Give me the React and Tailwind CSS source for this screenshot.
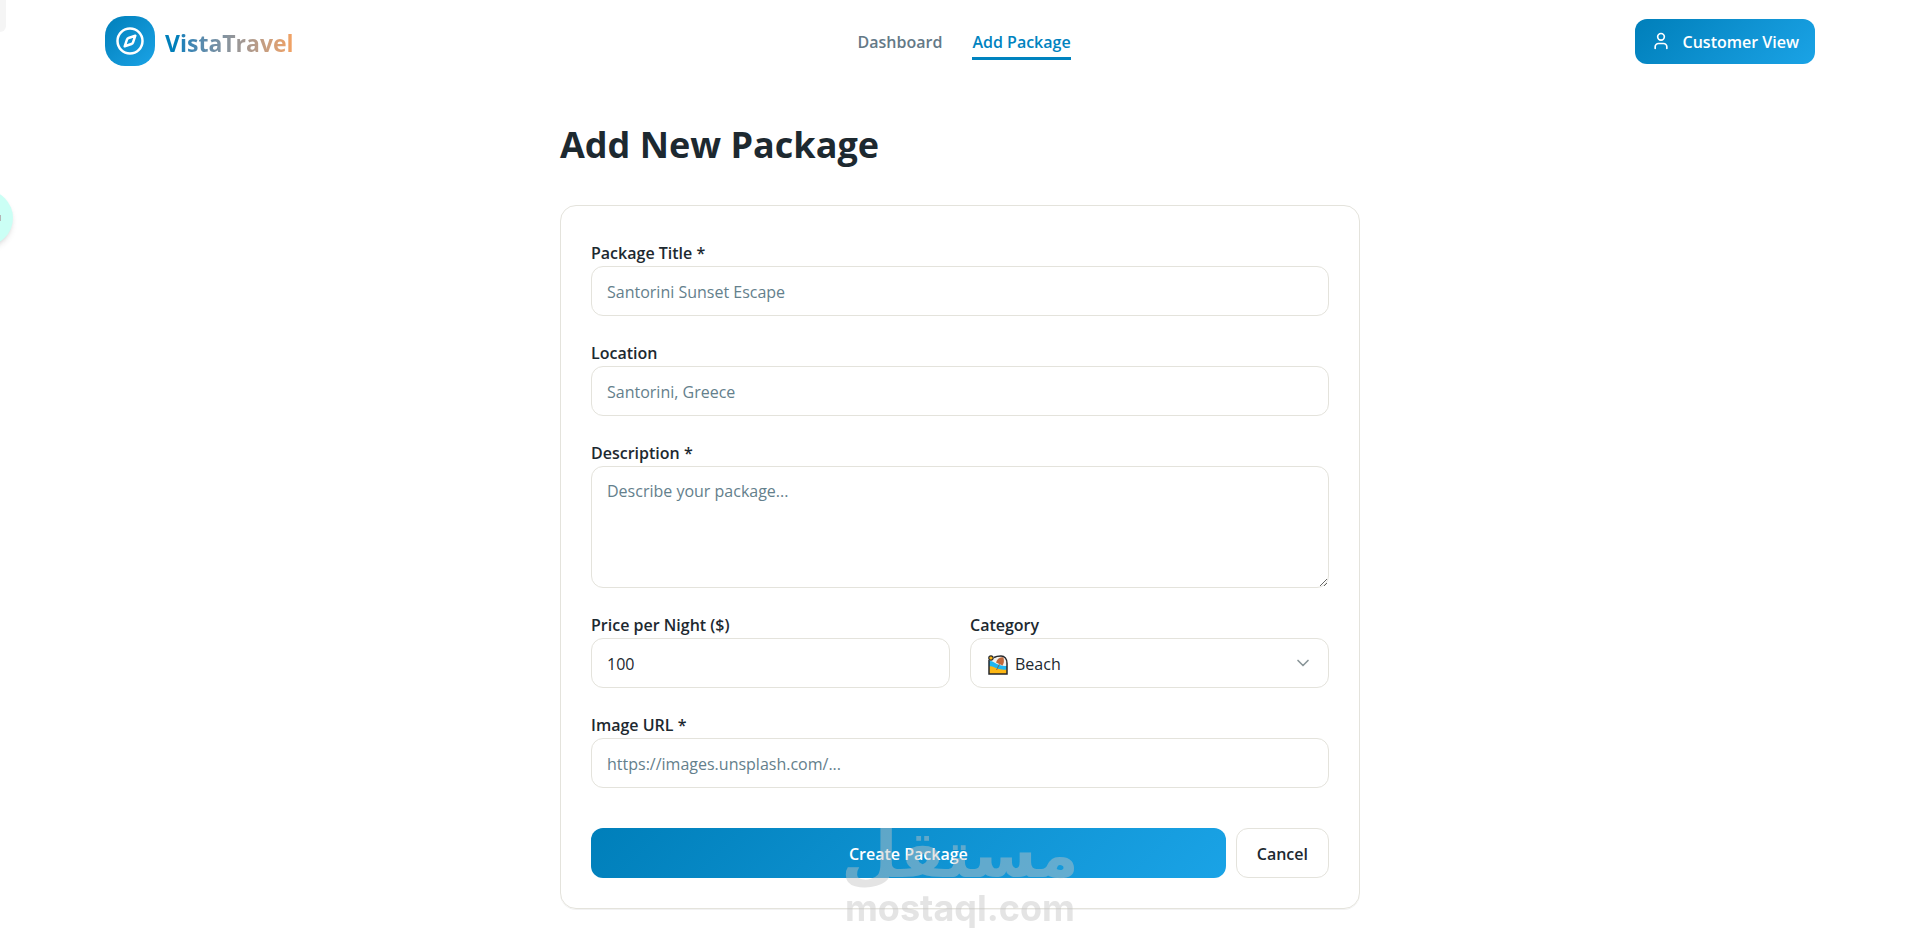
import { useState } from 'react'
import { Compass, User, ChevronDown } from 'lucide-react'

const inputClass =
  'block w-full rounded-xl border border-[#e4e3dc] bg-white px-[15px] text-[16px] text-[#1d2930] placeholder:text-[#64808c] focus:outline-none'

function Field({ id, label, children }) {
  return (
    <div>
      <label htmlFor={id} className="block pt-1 text-[16px] leading-[26px] font-semibold">
        {label}
      </label>
      {children}
    </div>
  )
}

function BeachIcon() {
  return (
    <svg viewBox="0 0 20 20" className="pointer-events-none absolute top-[17px] left-[18px] h-5 w-5">
      <path d="M1 6.5V19h18V8c0-4-2.500-7-6.500-7S7 2.500 5.500 3z" fill="#f4f1ec" />
      <path d="M1 6C4 5.500 6 7.500 9 9s6 2 10 2v4.500c-5 .5-8-1-11-2s-5-1.500-7-1z" fill="#1fb6f2" />
      <path d="M1 11.500c3-.8 5 1 8 2s6 1.500 10 1V19H1z" fill="#fdb714" />
      <path d="M8 7.500C9 4 12 1.500 15.500 2.500c.8 3 .5 6-1 8z" fill="#c1693c" />
      <path d="M11.500 9 8.500 15" stroke="#7d5a3c" strokeWidth="0.800" fill="none" />
      <path
        d="M1 5v14h18V8.500C19 4 16.500 1 13 1c-3 0-5 .3-7 1.500"
        fill="none"
        stroke="#26292c"
        strokeWidth="1.500"
      />
      <circle cx="3" cy="3" r="2.200" fill="#fdb714" stroke="#26292c" strokeWidth="1.200" />
    </svg>
  )
}

function Header() {
  return (
    <header className="px-[105px]">
      <div className="flex h-[82px] items-center justify-between">
        <a href="#home" className="flex items-center gap-[10px]">
          <span className="flex h-[50px] w-[50px] items-center justify-center rounded-[20px] bg-linear-135 from-[#007fba] to-[#1aa3e6]">
            <Compass size={30} className="text-white" />
          </span>
          <span className="bg-linear-to-r from-[#007fba] from-10% to-[#f4a261] bg-clip-text pt-1 text-[23px] font-bold text-transparent">
            VistaTravel
          </span>
        </a>
        <nav className="flex gap-[30px] pt-1 text-[16px] leading-[30px] font-semibold">
          <a href="#dashboard" className="text-[#647987]">Dashboard</a>
          <a href="#add" className="border-b-3 border-[#0083bf] text-[#0083bf]">Add Package</a>
        </nav>
        <button
          type="button"
          className="flex h-[45px] items-center gap-3 rounded-xl bg-linear-135 from-[#007fba] to-[#1aa3e6] px-4 text-[16px] font-semibold text-white"
        >
          <User size={20} />
          <span className="pt-0.5">Customer View</span>
        </button>
      </div>
    </header>
  )
}

function Watermark() {
  return (
    <div className="pointer-events-none absolute inset-x-0 bottom-5 flex flex-col items-center text-[#c4c4c4] opacity-45">
      <span lang="ar" dir="rtl" className="font-['DejaVu_Sans',sans-serif] text-[65px] leading-[66px] font-bold">
        مستقل
      </span>
      <span className="font-['Inter',sans-serif] text-[36px] leading-[40px] font-bold">mostaql.com</span>
    </div>
  )
}

export default function App() {
  const [price, setPrice] = useState('100')
  const [category, setCategory] = useState('beach')

  return (
    <div className="relative min-h-screen overflow-hidden bg-white pb-[39px] font-['Open_Sans',sans-serif] text-[#1d2930]">
      <Header />
      <main className="mx-auto max-w-[800px] pt-10">
        <h1 className="mb-[38px] text-[36px] leading-[45px] font-bold">Add New Package</h1>
        <form
          className="flex flex-col gap-5 rounded-2xl border border-[#e4e3dc] p-[30px] shadow-2xs"
          onSubmit={(e) => e.preventDefault()}
        >
          <Field id="title" label="Package Title *">
            <input id="title" className={`${inputClass} h-[50px] pt-0.5`} placeholder="Santorini Sunset Escape" />
          </Field>
          <Field id="location" label="Location">
            <input id="location" className={`${inputClass} h-[50px] pt-0.5`} placeholder="Santorini, Greece" />
          </Field>
          <Field id="description" label="Description *">
            <textarea
              id="description"
              className={`${inputClass} h-[122px] resize-y py-3`}
              placeholder="Describe your package..."
            />
          </Field>
          <div className="grid grid-cols-2 gap-5">
            <Field id="price" label="Price per Night ($)">
              <input
                id="price"
                inputMode="numeric"
                className={`${inputClass} h-[50px] pt-0.5`}
                value={price}
                onChange={(e) => setPrice(e.target.value)}
              />
            </Field>
            <Field id="category" label="Category">
              <div className="relative">
                <select
                  id="category"
                  className={`${inputClass} h-[50px] appearance-none pt-0.5 pl-[44px]`}
                  value={category}
                  onChange={(e) => setCategory(e.target.value)}
                >
                  <option value="beach">Beach</option>
                </select>
                <BeachIcon />
                <ChevronDown
                  size={20}
                  className="pointer-events-none absolute top-[15px] right-4 text-[#8a9699]"
                />
              </div>
            </Field>
          </div>
          <Field id="image" label="Image URL *">
            <input id="image" className={`${inputClass} h-[50px] pt-0.5`} placeholder="https://images.unsplash.com/..." />
          </Field>
          <div className="flex gap-[10px] pt-5 text-[16px] font-semibold">
            <button
              type="submit"
              className="h-[50px] flex-1 rounded-xl bg-linear-135 from-[#007fba] to-[#1aa3e6] pt-0.5 text-white"
            >
              Create Package
            </button>
            <button type="button" className="h-[50px] rounded-xl border border-[#e4e3dc] bg-white px-5 pt-0.5">
              Cancel
            </button>
          </div>
        </form>
      </main>

      {/* widgets tucked behind the left edge */}
      <div className="absolute top-0 left-0 h-8 w-1.5 rounded-br-md bg-[#f5f5f5]" />
      <div className="absolute top-[190px] -left-[43px] flex h-14 w-14 items-center justify-end rounded-full bg-[#cbfff5] shadow-md">
        <span className="mr-3 h-1.5 w-1 bg-[#b5b5b5]" />
      </div>
      <Watermark />
    </div>
  )
}
